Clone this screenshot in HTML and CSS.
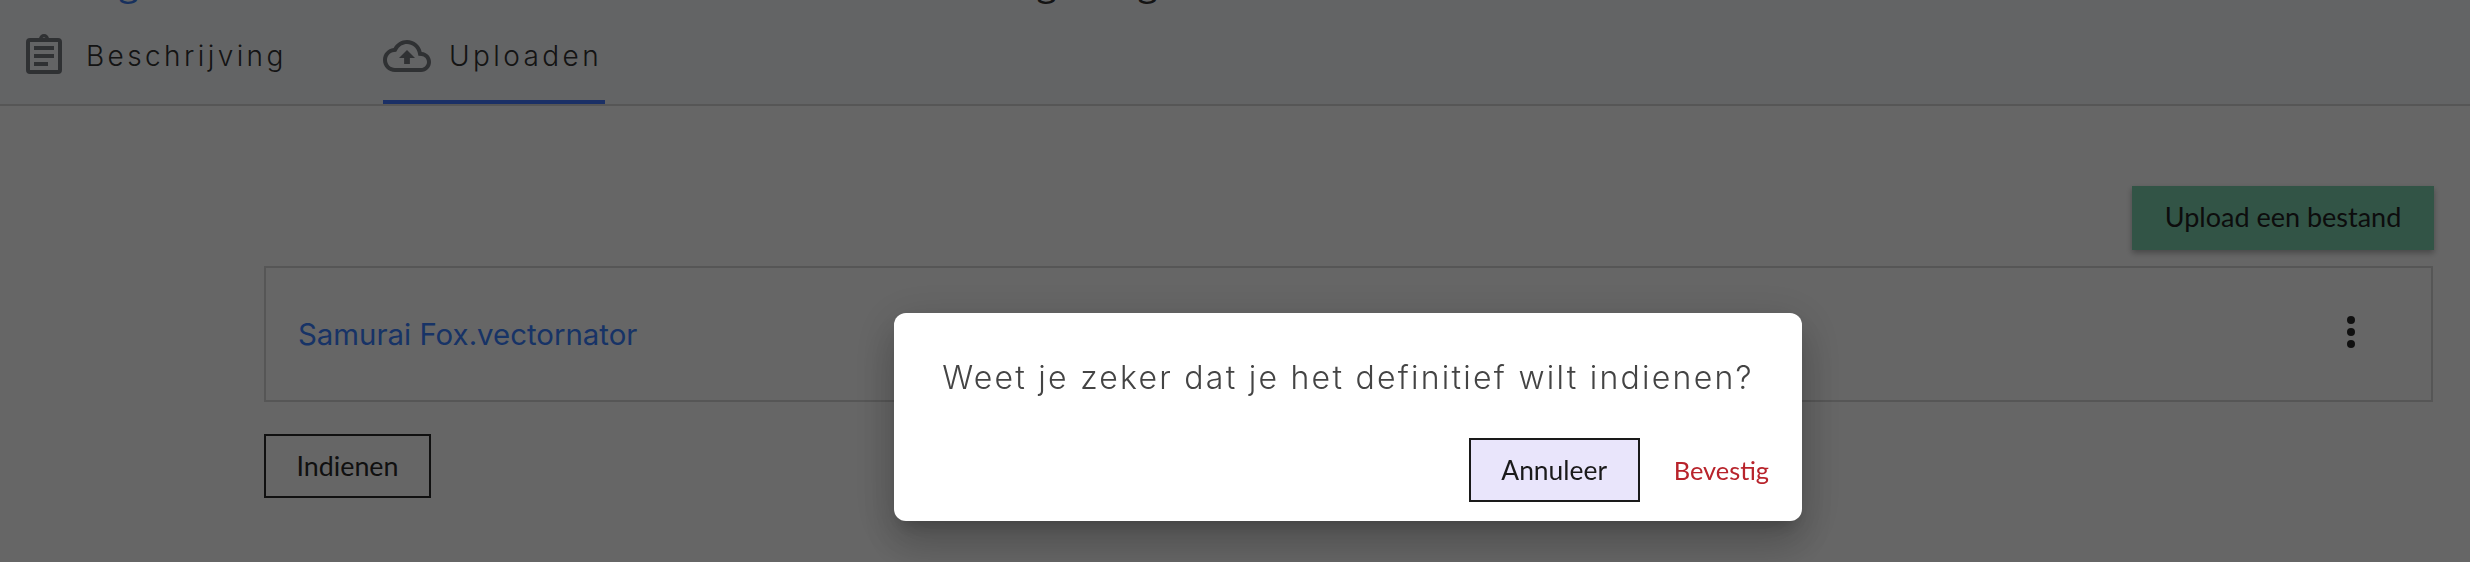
FILE: index.html
```html
<!DOCTYPE html>
<html lang="nl">
<head>
<meta charset="utf-8">
<title>Uploaden</title>
<link rel="stylesheet" href="styles.css">
</head>
<body>
<div class="page">
  <header class="topbar">
    <div class="title-strip">
      <span class="crumb">g</span>
      <span class="title-a">g</span>
      <span class="title-b">g</span>
    </div>
    <nav class="tabs">
      <a class="tab tab-first">
        <svg class="tab-icon-clip" viewBox="0 0 36 40" aria-hidden="true">
          <rect x="2" y="6" width="32" height="32" rx="2" fill="none" stroke="currentColor" stroke-width="4"/>
          <path fill="currentColor" fill-rule="evenodd" d="M13 5a5 5 0 0 1 10 0v2H13zM18 3.2a1.7 1.7 0 1 0 0 3.4a1.7 1.7 0 0 0 0-3.4z"/>
          <path fill="currentColor" d="M8 12h20v4H8zM8 20h20v4H8zM8 28h14v4H8z"/>
        </svg>
        <span class="tab-label tab-label-a">Beschrijving</span>
      </a>
      <a class="tab tab-active">
        <svg class="tab-icon-cloud" viewBox="0 4 24 16" aria-hidden="true">
          <path fill="currentColor" d="M19.35 10.04C18.67 6.59 15.64 4 12 4 9.11 4 6.6 5.64 5.35 8.04 2.34 8.36 0 10.91 0 14c0 3.31 2.69 6 6 6h13c2.76 0 5-2.24 5-5 0-2.64-2.05-4.78-4.65-4.96zM19 18H6c-2.21 0-4-1.79-4-4 0-2.05 1.53-3.76 3.56-3.97l1.07-.11.5-.95C8.08 7.14 9.94 6 12 6c2.62 0 4.88 1.86 5.39 4.43l.3 1.5 1.53.11c1.56.1 2.78 1.41 2.78 2.96 0 1.65-1.35 3-3 3zM8 13h2.55v3h2.9v-3H16l-4-4z"/>
        </svg>
        <span class="tab-label tab-label-b">Uploaden</span>
      </a>
    </nav>
  </header>
  <main class="content">
    <div class="upload-row">
      <button class="btn-upload">Upload een bestand</button>
    </div>
    <div class="file-card">
      <a class="file-link">Samurai Fox.vectornator</a>
      <svg class="more" viewBox="0 0 24 24" aria-hidden="true">
        <circle cx="12" cy="6" r="2" fill="currentColor"/>
        <circle cx="12" cy="12" r="2" fill="currentColor"/>
        <circle cx="12" cy="18" r="2" fill="currentColor"/>
      </svg>
    </div>
    <button class="btn-submit">Indienen</button>
  </main>
</div>
<div class="overlay"></div>
<div class="dialog" role="dialog">
  <p class="question">Weet je zeker dat je het definitief wilt indienen?</p>
  <div class="actions">
    <button class="btn-cancel">Annuleer</button>
    <button class="btn-confirm">Bevestig</button>
  </div>
</div>
</body>
</html>
```
FILE: styles.css
```css
* { box-sizing: border-box; }
html, body { margin: 0; padding: 0; height: 100%; overflow: hidden; }
body { background: #fff; font-family: "Lato", "Liberation Sans", sans-serif; color: #2a2a2a; }

.page { height: 562px; display: flex; flex-direction: column; }

.topbar { background: #f8fafc; border-bottom: 2px solid #d8d8d8; height: 106px; flex: none; display: flex; flex-direction: column; }

.title-strip { height: 0; display: flex; position: relative; overflow: visible; font-family: "Open Sans", sans-serif; font-size: 36px; line-height: 1; }
.crumb, .title-a, .title-b { position: absolute; top: -36px; }
.crumb { left: 119px; color: #3a78e8; }
.title-a { left: 1037px; color: #333; }
.title-b { left: 1138px; color: #333; }

.tabs { display: flex; height: 104px; padding-left: 26px; gap: 0; }
.tab { display: flex; align-items: flex-start; color: #111; height: 104px; }
.tab-first { width: 357px; }
.tab-active { width: 222px; border-bottom: 4px solid #4478ff; }
.tab-icon-clip { width: 36px; height: 40px; margin-top: 34px; color: #777a80; flex: none; }
.tab-icon-cloud { width: 48px; height: 32px; margin-top: 40px; color: #777a80; flex: none; }
.tab-label { font-family: "Inter", "Open Sans", sans-serif; font-weight: 300; font-size: 28px; line-height: 34px; margin-top: 39px; color: #333; white-space: nowrap; letter-spacing: 3.4px; }
.tab-label-a { margin-left: 24px; }
.tab-label-b { margin-left: 18px; }

.content { flex: 1; padding: 80px 37px 0 264px; display: flex; flex-direction: column; align-items: flex-start; }

.upload-row { align-self: stretch; display: flex; justify-content: flex-end; margin-right: -1px; }
.btn-upload { width: 302px; height: 64px; border: 0; background: #7dd2af; box-shadow: 0 3px 6px rgba(0,0,0,.3); font-family: inherit; font-size: 27px; color: #222; padding: 0 0 3px; }

.file-card { align-self: stretch; height: 136px; margin-top: 16px; border: 2px solid #d8d8d8; display: flex; align-items: center; justify-content: space-between; padding-left: 32px; padding-right: 56px; }
.file-link { font-family: "Inter", "Open Sans", sans-serif; font-size: 29.4px; color: #3a80ff; }
.more { width: 48px; height: 48px; color: #2a2a2a; margin-top: -4px; flex: none; }

.btn-submit { width: 167px; height: 64px; margin-top: 32px; border: 2px solid #2a2a2a; background: transparent; font-family: inherit; font-size: 26.8px; color: #2a2a2a; padding: 0; }

.overlay { position: fixed; inset: 0; background: rgba(0,0,0,.6); }

.dialog { position: fixed; left: 894px; top: 313px; width: 908px; height: 208px; background: #fff; border-radius: 12px; box-shadow: 0 11px 15px -7px rgba(0,0,0,.2), 0 24px 38px 3px rgba(0,0,0,.14), 0 9px 46px 8px rgba(0,0,0,.12); padding: 0 33px; display: flex; flex-direction: column; }
.question { margin: 45px 0 0; font-family: "Inter", "Open Sans", sans-serif; font-weight: 300; font-size: 32px; line-height: 40px; letter-spacing: 2.25px; color: #444; text-align: center; white-space: nowrap; }
.actions { display: flex; justify-content: flex-end; align-items: center; margin-top: 40px; }
.btn-cancel { width: 171px; height: 64px; border: 2px solid #1a1a1a; background: #e9e5fb; font-family: inherit; font-size: 26.4px; color: #1a1a1a; padding: 0; }
.btn-confirm { border: 0; background: none; margin-left: 34px; padding: 0; font-family: inherit; font-size: 25.4px; color: #b8232b; }
```
